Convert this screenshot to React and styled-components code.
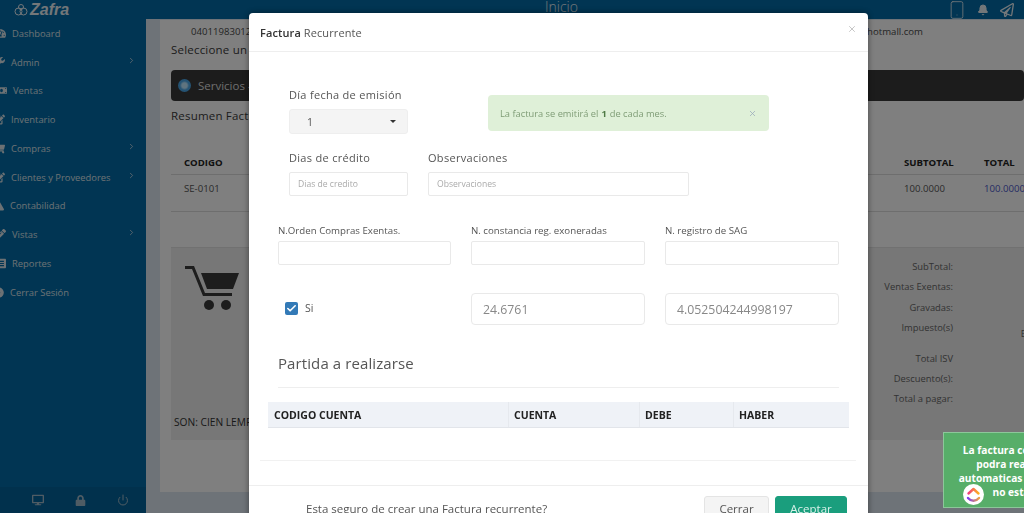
import React from "react";
import styled, { createGlobalStyle } from "styled-components";
import { Bell, ChevronRight, Check, Power, Smartphone, X } from "lucide-react";
import {
  FaTachometerAlt,
  FaWrench,
  FaMoneyBill,
  FaEdit,
  FaShoppingCart,
  FaExclamationTriangle,
  FaPencilAlt,
  FaListAlt,
  FaDotCircle,
  FaDesktop,
  FaLock,
  FaRegPaperPlane,
} from "react-icons/fa";

const Global = createGlobalStyle`
  html, body { margin: 0; height: 100%; overflow: hidden; }
  body { font-family: "Open Sans", sans-serif; background: #dce6f0; }
  * { box-sizing: border-box; }
`;

const Page = styled.div`
  height: 513px;
  display: flex;
  flex-direction: column;
  overflow: hidden;
`;

const TopBar = styled.header`
  height: 19px;
  flex: none;
  background: #026aa6;
  display: flex;
  align-items: center;
  color: #e6eef3;
  overflow: hidden;
`;

const Brand = styled.div`
  width: 146px;
  display: flex;
  align-items: center;
  gap: 2px;
  padding-left: 14px;
  font-family: "Liberation Sans", sans-serif;
  font-weight: 700;
  font-style: italic;
  font-size: 16px;
`;

const PageTitle = styled.div`
  width: 432px;
  margin-top: -6px;
  text-align: right;
  font-size: 14px;
  font-weight: 300;
`;

const TopIcons = styled.div`
  margin-left: auto;
  display: flex;
  align-items: center;
  gap: 10.5px;
  padding-right: 10.5px;
`;

const Shell = styled.div`
  flex: 1;
  display: flex;
  min-height: 0;
`;

const Sidebar = styled.aside`
  width: 146px;
  flex: none;
  background: #026aa6;
  display: flex;
  flex-direction: column;
  overflow: hidden;
`;

const Nav = styled.nav`
  flex: 1;
`;

const NavItem = styled.div`
  height: 28.75px;
  display: flex;
  align-items: center;
  gap: 6px;
  margin-left: ${(p) => p.$shift}px;
  padding-right: 10px;
  color: #d8e2e8;
  font-size: 9.4px;
  white-space: nowrap;
  svg.lead { flex: none; width: 11px; height: 11px; }
  svg.more { margin-left: auto; margin-top: -4px; }
`;

const SideFoot = styled.div`
  height: 26px;
  flex: none;
  background: #02629a;
  display: flex;
  align-items: center;
  padding-left: 32px;
  gap: 31px;
  color: #9fb9c9;
`;

const Main = styled.main`
  flex: 1;
  min-width: 0;
  padding: 1px 0 21px 14px;
`;

const Panel = styled.section`
  height: 100%;
  background: #fff;
  padding: 0 0 0 11px;
  overflow: hidden;
  color: #4a4a4a;
  font-size: 9.6px;
`;

const ContactRow = styled.div`
  display: flex;
  justify-content: space-between;
  height: 23px;
  padding: 5px 101px 0 20px;
  white-space: nowrap;
`;

const Prompt = styled.div`
  font-size: 11.5px;
  line-height: 14px;
  height: 27px;
  color: #3a3a3a;
  letter-spacing: 0.2px;
  white-space: nowrap;
`;

const DarkBar = styled.div`
  height: 31px;
  border-radius: 4px;
  background: #383838;
  color: #ddd;
  display: flex;
  align-items: center;
  gap: 7px;
  padding-left: 7px;
  font-size: 11.5px;
  white-space: nowrap;
`;

const Radio = styled.span`
  width: 13px;
  height: 13px;
  border-radius: 50%;
  background: radial-gradient(circle, #bfe8ff 0 28%, #4aa6e6 50%, #4aa6e6 100%);
`;

const Resumen = styled(Prompt)`
  margin-top: 8px;
  height: 41px;
`;

const DataTable = styled.div`
  padding-left: 13px;
`;

const DataRow = styled.div`
  display: grid;
  grid-template-columns: 626px 94px 80px 80px;
  align-items: center;
  height: ${(p) => p.$h}px;
  margin-left: -13px;
  padding-left: 13px;
  padding-bottom: ${(p) => p.$pb || 0}px;
  border-bottom: 1px solid #ddd;
  white-space: nowrap;
  font-weight: ${(p) => (p.$head ? 700 : 400)};
  color: ${(p) => (p.$head ? "#222" : "#555")};
`;

const BlueCell = styled.span`
  color: #4a57c9;
`;

const SummaryCard = styled.div`
  margin-top: 35px;
  height: 193px;
  background: #eee;
  border-top: 1px solid #e2e2e2;
  display: flex;
  justify-content: space-between;
`;

const CartCol = styled.div`
  display: flex;
  flex-direction: column;
  justify-content: space-between;
  padding: 17px 0 11px 3px;
  color: #333;
  font-size: 10.2px;
  white-space: nowrap;
  svg { margin-left: 9px; }
`;

const Totals = styled.div`
  width: 204px;
  flex: none;
  padding-top: 12px;
  margin-right: 71px;
  display: flex;
  flex-direction: column;
  align-items: flex-end;
  color: #666;
  font-size: 9.4px;
`;

const TotalLine = styled.div`
  height: ${(p) => p.$h || 20.3}px;
  line-height: 14px;
  position: relative;
`;

const StrayLetter = styled.span`
  position: absolute;
  right: -73px;
  top: 6px;
`;

const Overlay = styled.div`
  position: fixed;
  inset: 0;
  background: rgba(0, 0, 0, 0.5);
  padding: 13px 0 0 249px;
  overflow: hidden;
`;

const Modal = styled.div`
  width: 619px;
  background: #fff;
  border-radius: 4px 4px 0 0;
  box-shadow: 0 0 6px rgba(0, 0, 0, 0.45);
  color: #555;
`;

const ModalHead = styled.div`
  height: 39px;
  display: flex;
  align-items: center;
  justify-content: space-between;
  padding: 0 11px;
  border-bottom: 1px solid #eee;
  font-size: 11px;
  letter-spacing: 0.1px;
  color: #555;
  b { font-weight: 600; color: #333; }
  svg { margin-top: -6px; color: #bbb; }
`;

const ModalBody = styled.div`
  height: 433px;
  padding-top: 35px;
`;

const FieldRow = styled.div`
  display: flex;
  gap: 20px;
  margin-top: ${(p) => p.$top || 0}px;
  padding-left: ${(p) => p.$left}px;
`;

const Field = styled.div`
  width: ${(p) => p.$w}px;
  flex: none;
`;

const BigLabel = styled.div`
  height: 15px;
  line-height: 15px;
  margin-bottom: 7px;
  font-size: 11px;
  letter-spacing: 0.3px;
  color: #555;
  white-space: nowrap;
`;

const SmallLabel = styled.div`
  height: 15px;
  line-height: 15px;
  margin-bottom: 3px;
  font-size: 9.7px;
  color: #555;
  white-space: nowrap;
`;

const FakeSelect = styled.div`
  height: 25px;
  display: flex;
  align-items: center;
  justify-content: space-between;
  padding: 0 11px 0 17px;
  background: #f4f4f4;
  border: 1px solid #eee;
  border-radius: 3px;
  font-size: 10.5px;
  &::after {
    content: "";
    border-top: 3px solid #333;
    border-left: 3px solid transparent;
    border-right: 3px solid transparent;
  }
`;

const Alert = styled.div`
  width: 281px;
  height: 36px;
  margin: 8px 0 0 60px;
  padding: 0 12px;
  display: flex;
  align-items: center;
  justify-content: space-between;
  background: #dff0d8;
  border-radius: 4px;
  font-size: 9.3px;
  color: #7f9c76;
  b { color: #4f7a45; margin: 0 3px; }
  svg { color: #9ab; }
`;

const TextInput = styled.input`
  display: block;
  width: 100%;
  height: ${(p) => p.$h || 24}px;
  padding: 0 ${(p) => (p.$big ? 11 : 8)}px;
  border: 1px solid #e9e9e9;
  border-radius: ${(p) => (p.$big ? 4 : 2)}px;
  outline: none;
  background: #fff;
  color: #888;
  font-family: "Open Sans", sans-serif;
  font-size: ${(p) => (p.$big ? 12.3 : 8.6)}px;
  &::placeholder { color: #aaa; }
`;

const CheckCell = styled.label`
  width: 173px;
  flex: none;
  display: flex;
  align-items: center;
  gap: 7px;
  padding: 0 0 2px 7px;
  font-size: 10.5px;
`;

const CheckBox = styled.span`
  width: 13px;
  height: 13px;
  border-radius: 2px;
  background: #337ab7;
  color: #fff;
  display: flex;
  align-items: center;
  justify-content: center;
`;

const SectionTitle = styled.h3`
  margin: 28px 0 0 29px;
  width: 561px;
  height: 35px;
  font-size: 15px;
  font-weight: 400;
  line-height: 21px;
  letter-spacing: 0.1px;
  color: #555;
  border-bottom: 1px solid #eee;
`;

const AccountHead = styled.div`
  display: grid;
  grid-template-columns: 240px 131px 94px 116px;
  width: 581px;
  height: 26px;
  margin: 14px 0 0 19px;
  background: #eff2f7;
  border-bottom: 1px solid #e2e5ea;
  font-size: 10.5px;
  font-weight: 700;
  color: #222;
`;

const AccountCell = styled.div`
  display: flex;
  align-items: center;
  padding-left: 6px;
  & + & { border-left: 1px solid #e6e9ee; padding-left: 5px; }
`;

const ThinRule = styled.div`
  height: 1px;
  width: 596px;
  margin: 32px 0 0 11px;
  background: #f1f1f1;
`;

const ModalFoot = styled.div`
  border-top: 1px solid #eee;
  height: 50px;
  display: flex;
  align-items: flex-start;
  padding: 10px 21px 0 57px;
  font-size: 11.5px;
  color: #555;
`;

const FootText = styled.span`
  margin-top: 5px;
  flex: 1;
`;

const Button = styled.button`
  width: ${(p) => p.$w}px;
  height: 32px;
  margin-left: ${(p) => p.$gap || 0}px;
  border: 1px solid ${(p) => (p.$primary ? "#1a9e7d" : "#e4e4e4")};
  border-radius: 3px;
  background: ${(p) => (p.$primary ? "#1a9e7d" : "#f4f4f4")};
  color: ${(p) => (p.$primary ? "#d9f1ea" : "#555")};
  font-family: "Open Sans", sans-serif;
  font-size: 11.5px;
  padding: 0 0 7px;
`;

const Toast = styled.div`
  position: fixed;
  left: 943px;
  top: 432px;
  width: 200px;
  height: 76px;
  padding-top: 10px;
  background: #57ae69;
  border: 1px solid #8cc79a;
  color: #fff;
  font-size: 10.2px;
  font-weight: 700;
  line-height: 14px;
  text-align: center;
  white-space: nowrap;
`;

const HelperBadge = styled.div`
  position: fixed;
  left: 963px;
  top: 484px;
  width: 21px;
  height: 21px;
  border-radius: 50%;
  background: #fff;
  display: flex;
  align-items: center;
  justify-content: center;
`;

const menu = [
  { label: "Dashboard", Icon: FaTachometerAlt, shift: -5 },
  { label: "Admin", Icon: FaWrench, more: true, shift: -6 },
  { label: "Ventas", Icon: FaMoneyBill, shift: -4 },
  { label: "Inventario", Icon: FaEdit, shift: -6 },
  { label: "Compras", Icon: FaShoppingCart, more: true, shift: -6 },
  { label: "Clientes y Proveedores", Icon: FaEdit, more: true, shift: -6 },
  { label: "Contabilidad", Icon: FaExclamationTriangle, shift: -7 },
  { label: "Vistas", Icon: FaPencilAlt, more: true, shift: -5 },
  { label: "Reportes", Icon: FaListAlt, shift: -5 },
  { label: "Cerrar Sesión", Icon: FaDotCircle, shift: -7 },
];

const Cart = () => (
  <svg width="58" height="46" viewBox="0 0 58 46">
    <path d="M2 2.5h8l11 27h28" fill="none" stroke="#3a3a3a" strokeWidth="3" />
    <path d="M18 8h38l-6 16H24z" fill="#3a3a3a" />
    <circle cx="26" cy="40" r="5" fill="#3a3a3a" />
    <circle cx="43" cy="40" r="5" fill="#3a3a3a" />
  </svg>
);

const Flower = () => (
  <svg width="14" height="14" viewBox="0 0 14 14" fill="none" stroke="#e6eef3" strokeWidth="1">
    <circle cx="4.5" cy="8.5" r="3.5" />
    <circle cx="9.5" cy="8.5" r="3.5" />
    <circle cx="7" cy="4" r="2.5" />
  </svg>
);

const UpLogo = () => (
  <svg width="15" height="16" viewBox="0 0 15 16" fill="none" strokeWidth="2.4" strokeLinecap="round" strokeLinejoin="round">
    <defs>
      <linearGradient id="upTop" x1="0" x2="1" y1="0" y2="0">
        <stop offset="0" stopColor="#f0407a" />
        <stop offset="1" stopColor="#ffb020" />
      </linearGradient>
      <linearGradient id="upLow" x1="0" x2="1" y1="0" y2="0">
        <stop offset="0" stopColor="#7b3cf0" />
        <stop offset="1" stopColor="#f0a040" />
      </linearGradient>
    </defs>
    <path d="M2.5 6.5 7.5 2l5 4.5" stroke="url(#upTop)" />
    <path d="M2 11c3 3.6 8 3.6 11 0" stroke="url(#upLow)" />
  </svg>
);

export default function App() {
  return (
    <>
      <Global />
      <Page>
        <TopBar>
          <Brand>
            <Flower />
            Zafra
          </Brand>
          <PageTitle>Inicio</PageTitle>
          <TopIcons>
            <Smartphone size={20} strokeWidth={1} />
            <Bell size={12} fill="currentColor" />
            <FaRegPaperPlane size={14} />
          </TopIcons>
        </TopBar>
        <Shell>
          <Sidebar>
            <Nav>
              {menu.map(({ label, Icon, more, shift }) => (
                <NavItem key={label} $shift={shift}>
                  <Icon className="lead" />
                  {label}
                  {more && <ChevronRight className="more" size={9} />}
                </NavItem>
              ))}
            </Nav>
            <SideFoot>
              <FaDesktop size={12} />
              <FaLock size={11} />
              <Power size={12} />
            </SideFoot>
          </Sidebar>
          <Main>
            <Panel>
              <ContactRow>
                <span>0401198301234</span>
                <span>facturacion@hotmall.com</span>
              </ContactRow>
              <Prompt>Seleccione un</Prompt>
              <DarkBar>
                <Radio />
                Servicios - Productos
              </DarkBar>
              <Resumen>Resumen Factura</Resumen>
              <DataTable>
                <DataRow $head $h={25}>
                  <span>CODIGO</span>
                  <span>DESCUENTO</span>
                  <span>SUBTOTAL</span>
                  <span>TOTAL</span>
                </DataRow>
                <DataRow $h={37} $pb={10}>
                  <span>SE-0101</span>
                  <span />
                  <span>100.0000</span>
                  <BlueCell>100.0000</BlueCell>
                </DataRow>
              </DataTable>
              <SummaryCard>
                <CartCol>
                  <Cart />
                  <span>SON: CIEN LEMPIRAS</span>
                </CartCol>
                <Totals>
                  <TotalLine>SubTotal:</TotalLine>
                  <TotalLine>Ventas Exentas:</TotalLine>
                  <TotalLine>Gravadas:</TotalLine>
                  <TotalLine $h={31}>
                    Impuesto(s)
                    <StrayLetter>E</StrayLetter>
                  </TotalLine>
                  <TotalLine>Total ISV</TotalLine>
                  <TotalLine>Descuento(s):</TotalLine>
                  <TotalLine>Total a pagar:</TotalLine>
                </Totals>
              </SummaryCard>
            </Panel>
          </Main>
        </Shell>
      </Page>
      <Overlay>
        <Modal>
          <ModalHead>
            <span>
              <b>Factura</b> Recurrente
            </span>
            <X size={10} />
          </ModalHead>
          <ModalBody>
            <FieldRow $left={40}>
              <Field $w={119}>
                <BigLabel>Día fecha de emisión</BigLabel>
                <FakeSelect>1</FakeSelect>
              </Field>
              <Alert>
                <span>
                  La factura se emitirá el<b>1</b>de cada mes.
                </span>
                <X size={9} />
              </Alert>
            </FieldRow>
            <FieldRow $left={40} $top={16}>
              <Field $w={119}>
                <BigLabel>Dias de crédito</BigLabel>
                <TextInput placeholder="Dias de credito" />
              </Field>
              <Field $w={261}>
                <BigLabel>Observaciones</BigLabel>
                <TextInput placeholder="Observaciones" />
              </Field>
            </FieldRow>
            <FieldRow $left={29} $top={27}>
              <Field $w={173}>
                <SmallLabel>N.Orden Compras Exentas.</SmallLabel>
                <TextInput />
              </Field>
              <Field $w={174}>
                <SmallLabel>N. constancia reg. exoneradas</SmallLabel>
                <TextInput />
              </Field>
              <Field $w={174}>
                <SmallLabel>N. registro de SAG</SmallLabel>
                <TextInput />
              </Field>
            </FieldRow>
            <FieldRow $left={29} $top={28}>
              <CheckCell>
                <CheckBox>
                  <Check size={11} strokeWidth={3.5} />
                </CheckBox>
                Si
              </CheckCell>
              <Field $w={174}>
                <TextInput $big $h={32} defaultValue="24.6761" />
              </Field>
              <Field $w={174}>
                <TextInput $big $h={32} defaultValue="4.052504244998197" />
              </Field>
            </FieldRow>
            <SectionTitle>Partida a realizarse</SectionTitle>
            <AccountHead>
              <AccountCell>CODIGO CUENTA</AccountCell>
              <AccountCell>CUENTA</AccountCell>
              <AccountCell>DEBE</AccountCell>
              <AccountCell>HABER</AccountCell>
            </AccountHead>
            <ThinRule />
          </ModalBody>
          <ModalFoot>
            <FootText>Esta seguro de crear una Factura recurrente?</FootText>
            <Button $w={65}>Cerrar</Button>
            <Button $w={72} $gap={6} $primary>
              Aceptar
            </Button>
          </ModalFoot>
        </Modal>
      </Overlay>
      <Toast>
        La factura con este CAI ya no se
        <br />
        podra realizar las facturas
        <br />
        automaticas porque el CAI actual
        <br />
        no esta configurada
      </Toast>
      <HelperBadge>
        <UpLogo />
      </HelperBadge>
    </>
  );
}
